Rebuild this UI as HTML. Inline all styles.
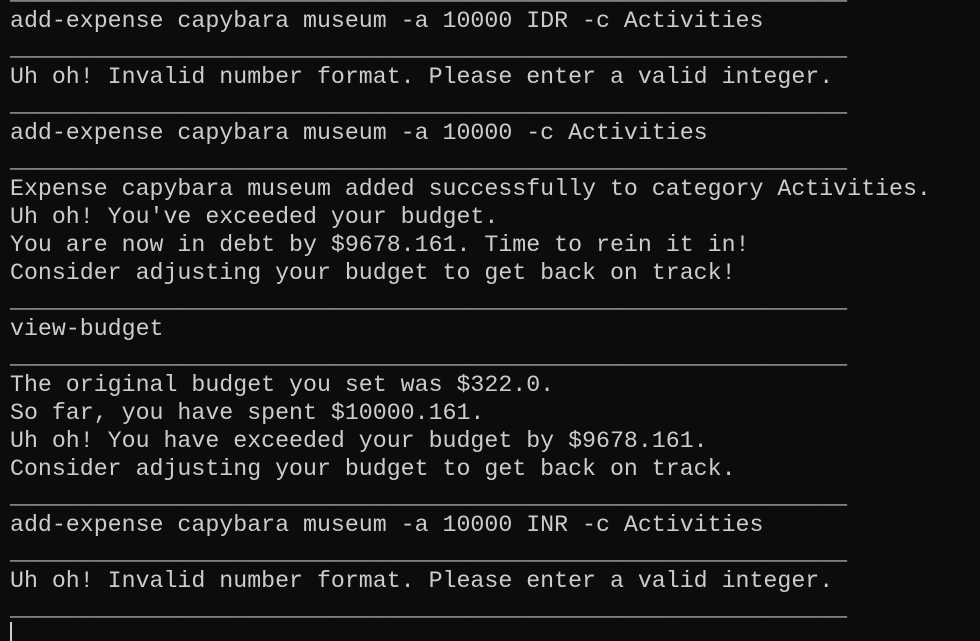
<!DOCTYPE html>
<html><head><meta charset="utf-8"><style>
html,body{margin:0;padding:0;background:#0c0c0c;width:980px;height:641px;overflow:hidden}
pre{position:absolute;left:10px;top:-21px;margin:0;font-family:"Liberation Mono",monospace;font-size:23.25px;line-height:28px;color:#cccccc;white-space:pre}
.cur{position:absolute;left:10px;top:622px;width:2px;height:19px;background:#cccccc}
</style></head><body>
<pre>____________________________________________________________
add-expense capybara museum -a 10000 IDR -c Activities
____________________________________________________________
Uh oh! Invalid number format. Please enter a valid integer.
____________________________________________________________
add-expense capybara museum -a 10000 -c Activities
____________________________________________________________
Expense capybara museum added successfully to category Activities.
Uh oh! You've exceeded your budget.
You are now in debt by $9678.161. Time to rein it in!
Consider adjusting your budget to get back on track!
____________________________________________________________
view-budget
____________________________________________________________
The original budget you set was $322.0.
So far, you have spent $10000.161.
Uh oh! You have exceeded your budget by $9678.161.
Consider adjusting your budget to get back on track.
____________________________________________________________
add-expense capybara museum -a 10000 INR -c Activities
____________________________________________________________
Uh oh! Invalid number format. Please enter a valid integer.
____________________________________________________________
</pre>
<div class="cur"></div>
</body></html>
